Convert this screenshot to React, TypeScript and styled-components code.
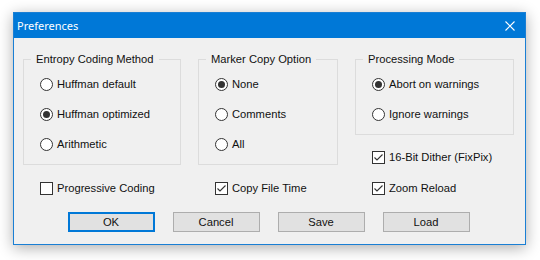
import { FC } from 'react'
import styled, { createGlobalStyle } from 'styled-components'

const GlobalStyle = createGlobalStyle`
    html, body {
        margin: 0;
        background: #ffffff;
    }
    * {
        box-sizing: border-box;
    }
`
const Page = styled.div`
    width: 540px;
    height: 260px;
    padding: 12px 0 0 13px;
`
const Window = styled.div`
    width: 513px;
    border: 1px solid #1a7fd4;
    background: #f0f0f0;
    box-shadow: 0 3px 14px rgba(0, 0, 0, 0.32);
`
const TitleBar = styled.div`
    height: 25px;
    background: #0078d7;
    display: flex;
    align-items: center;
    justify-content: space-between;
    padding: 0 10px 0 3px;
`
const Title = styled.span`
    color: #ffffff;
    font-family: 'Noto Sans', sans-serif;
    font-size: 11px;
`
const Body = styled.div`
    padding: 14px 11px 12px 9px;
    font-family: 'Liberation Sans', Arial, sans-serif;
    font-size: 11.2px;
    color: #111111;
`
const Grid = styled.div`
    display: grid;
    grid-template-columns: 158px 140px 159px;
    column-gap: 17px;
    row-gap: 15px;
`
const Column = styled.div`
    display: flex;
    flex-direction: column;
    gap: 14px;
`
const GroupBox = styled.fieldset`
    margin: 0;
    padding: 0 0 12px 0;
    min-inline-size: 0;
    border: 1px solid #dcdcdc;
`
const Legend = styled.legend`
    margin-left: 7px;
    padding: 0 5px;
    line-height: 14px;
`
const OptionList = styled.div`
    display: flex;
    flex-direction: column;
    gap: 14px;
    padding: 10px 0 0 16px;
`
const Option = styled.label`
    display: flex;
    align-items: center;
    gap: 4px;
    height: 16px;
    white-space: nowrap;
`
const Cell = styled.div`
    padding-left: 17px;
`
const RadioCircle = styled.span<{ $on?: boolean }>`
    width: 13px;
    height: 13px;
    flex: none;
    border-radius: 50%;
    border: 1px solid #333333;
    background: #ffffff;
    display: flex;
    align-items: center;
    justify-content: center;

    &::after {
        content: '';
        width: 7px;
        height: 7px;
        border-radius: 50%;
        background: ${p => (p.$on ? '#333333' : 'transparent')};
    }
`
const CheckSquare = styled.span`
    width: 13px;
    height: 13px;
    flex: none;
    border: 1px solid #333333;
    background: #ffffff;
    display: flex;
    align-items: center;
    justify-content: center;
`
const ButtonRow = styled.div`
    display: flex;
    justify-content: center;
    gap: 18px;
    margin-top: 16px;
`
const Button = styled.button<{ $default?: boolean }>`
    width: 87px;
    height: 20px;
    padding: 0;
    background: #e1e1e1;
    border: ${p => (p.$default ? '2px solid #0078d7' : '1px solid #adadad')};
    font-family: 'Liberation Sans', Arial, sans-serif;
    font-size: 11.2px;
    color: #111111;
`

const CloseIcon = () => (
    <svg width="10" height="10" viewBox="0 0 10 10">
        <path d="M0.5 0.5 L9.5 9.5 M9.5 0.5 L0.5 9.5" stroke="#ffffff" strokeWidth="1.1" />
    </svg>
)

const Radio: FC<{ label: string, on?: boolean }> = ({ label, on }) => (
    <Option>
        <RadioCircle $on={on} />
        {label}
    </Option>
)

const Check: FC<{ label: string, on?: boolean }> = ({ label, on }) => (
    <Option>
        <CheckSquare>
            {on && (
                <svg width="11" height="11" viewBox="0 0 11 11">
                    <path d="M1.5 5.5 L4 8 L9.5 2.5" stroke="#333333" strokeWidth="1.1" fill="none" />
                </svg>
            )}
        </CheckSquare>
        {label}
    </Option>
)

const App: FC = () => {
    return (
        <Page>
            <GlobalStyle />
            <Window>
                <TitleBar>
                    <Title>Preferences</Title>
                    <CloseIcon />
                </TitleBar>
                <Body>
                    <Grid>
                        <Column>
                            <GroupBox>
                                <Legend>Entropy Coding Method</Legend>
                                <OptionList>
                                    <Radio label="Huffman default" />
                                    <Radio label="Huffman optimized" on />
                                    <Radio label="Arithmetic" />
                                </OptionList>
                            </GroupBox>
                        </Column>
                        <Column>
                            <GroupBox>
                                <Legend>Marker Copy Option</Legend>
                                <OptionList>
                                    <Radio label="None" on />
                                    <Radio label="Comments" />
                                    <Radio label="All" />
                                </OptionList>
                            </GroupBox>
                        </Column>
                        <Column>
                            <GroupBox>
                                <Legend>Processing Mode</Legend>
                                <OptionList>
                                    <Radio label="Abort on warnings" on />
                                    <Radio label="Ignore warnings" />
                                </OptionList>
                            </GroupBox>
                            <Cell>
                                <Check label="16-Bit Dither (FixPix)" on />
                            </Cell>
                        </Column>
                        <Cell>
                            <Check label="Progressive Coding" />
                        </Cell>
                        <Cell>
                            <Check label="Copy File Time" on />
                        </Cell>
                        <Cell>
                            <Check label="Zoom Reload" on />
                        </Cell>
                    </Grid>
                    <ButtonRow>
                        <Button $default>OK</Button>
                        <Button>Cancel</Button>
                        <Button>Save</Button>
                        <Button>Load</Button>
                    </ButtonRow>
                </Body>
            </Window>
        </Page>
    )
}

export default App
